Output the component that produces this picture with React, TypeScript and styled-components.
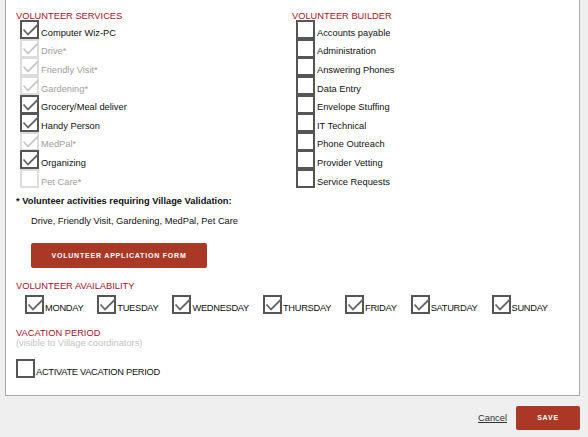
import React from 'react';
import styled, { createGlobalStyle } from 'styled-components';

const GlobalStyle = createGlobalStyle`
  body {
    margin: 0;
    background: #efefef;
    font-family: "Liberation Sans", Arial, sans-serif;
    color: #111;
  }
`;

const Page = styled.div`
  width: 588px;
  height: 437px;
  overflow: hidden;
`;

const Panel = styled.div`
  margin-left: 5px;
  width: 575px;
  padding: 11px 0 17px 10px;
  box-sizing: border-box;
  background: #fff;
  border: 1px solid #aaa;
  border-top: none;
`;

const Columns = styled.div`
  display: grid;
  grid-template-columns: 276px 1fr;
`;

const SectionTitle = styled.div<{ $gap?: number }>`
  margin-top: ${({ $gap }) => $gap || 0}px;
  font-size: 9.3px;
  line-height: 10px;
  color: #a3102c;
  text-transform: uppercase;
`;

const List = styled.div`
  margin-top: -1px;
  padding-left: 4px;
`;

const Row = styled.div`
  display: flex;
  align-items: flex-end;
  height: 18.625px;
`;

const Box = styled.span<{ $disabled?: boolean }>`
  position: relative;
  flex: none;
  width: 19px;
  height: 19px;
  margin-bottom: -0.375px;
  box-sizing: border-box;
  border: 2px solid ${({ $disabled }) => ($disabled ? '#dcdcdc' : '#555')};
  background: #fff;
`;

const Label = styled.span<{ $disabled?: boolean; $caps?: boolean }>`
  margin-left: ${({ $caps }) => ($caps ? 1 : 2)}px;
  font-size: 9.3px;
  line-height: 12px;
  letter-spacing: ${({ $caps }) => ($caps ? '-0.3px' : '0')};
  color: ${({ $disabled }) => ($disabled ? '#a0a0a0' : '#111')};
  white-space: nowrap;
`;

const Note = styled.div`
  margin-top: 7px;
  font-size: 9.3px;
  line-height: 12px;
  font-weight: bold;
`;

const NoteList = styled.div`
  margin-top: 8px;
  padding-left: 15px;
  font-size: 9.3px;
  line-height: 12px;
`;

const RedButton = styled.button`
  display: block;
  height: 25px;
  border: none;
  border-radius: 2px;
  background: #a93826;
  color: #fff;
  font-family: "Liberation Sans", Arial, sans-serif;
  font-size: 7px;
  font-weight: bold;
  letter-spacing: 0.8px;
  padding: 0;
  cursor: pointer;
`;

const FormButton = styled(RedButton)`
  margin: 16px 0 0 15px;
  width: 176px;
`;

const Days = styled.div`
  display: flex;
  gap: 14px;
  margin-top: 3.5px;
  padding-left: 9px;
`;

const Item = styled.div<{ $gap?: number }>`
  display: flex;
  align-items: flex-end;
  height: 19px;
  margin-top: ${({ $gap }) => $gap || 0}px;
`;

const Hint = styled.div`
  font-size: 9.3px;
  line-height: 10px;
  color: #c2c2c2;
`;

const Footer = styled.div`
  display: flex;
  justify-content: flex-end;
  align-items: center;
  gap: 9px;
  padding: 10px 8px 0 0;
`;

const CancelLink = styled.a`
  font-size: 9.3px;
  color: #333;
  text-decoration: underline;
  cursor: pointer;
`;

const SaveButton = styled(RedButton)`
  width: 64px;
  height: 24px;
`;

const Check = ({ disabled }: { disabled?: boolean }) => (
  <svg width="17" height="15" viewBox="0 0 17 15" style={{ position: 'absolute', left: 0, top: 1 }}>
    <polyline
      points="1.5,6.5 6,11.5 16,1.5"
      fill="none"
      stroke={disabled ? '#c8c8c8' : '#666'}
      strokeWidth="1.8"
    />
  </svg>
);

interface CheckItem {
  label: string;
  checked?: boolean;
  disabled?: boolean;
}

const Checkbox = ({ checked, disabled }: { checked?: boolean; disabled?: boolean }) => (
  <Box $disabled={disabled}>{checked && <Check disabled={disabled} />}</Box>
);

const SERVICES: CheckItem[] = [
  { label: 'Computer Wiz-PC', checked: true },
  { label: 'Drive*', checked: true, disabled: true },
  { label: 'Friendly Visit*', checked: true, disabled: true },
  { label: 'Gardening*', checked: true, disabled: true },
  { label: 'Grocery/Meal deliver', checked: true },
  { label: 'Handy Person', checked: true },
  { label: 'MedPal*', checked: true, disabled: true },
  { label: 'Organizing', checked: true },
  { label: 'Pet Care*', disabled: true },
];

const BUILDER: CheckItem[] = [
  { label: 'Accounts payable' },
  { label: 'Administration' },
  { label: 'Answering Phones' },
  { label: 'Data Entry' },
  { label: 'Envelope Stuffing' },
  { label: 'IT Technical' },
  { label: 'Phone Outreach' },
  { label: 'Provider Vetting' },
  { label: 'Service Requests' },
];

const DAYS = ['Monday', 'Tuesday', 'Wednesday', 'Thursday', 'Friday', 'Saturday', 'Sunday'];

const CheckList = ({ items }: { items: CheckItem[] }) => (
  <List>
    {items.map((item) => (
      <Row key={item.label}>
        <Checkbox checked={item.checked} disabled={item.disabled} />
        <Label $disabled={item.disabled}>{item.label}</Label>
      </Row>
    ))}
  </List>
);

const App = () => {
  return (
    <Page>
      <GlobalStyle />
      <Panel>
        <Columns>
          <div>
            <SectionTitle>Volunteer Services</SectionTitle>
            <CheckList items={SERVICES} />
          </div>
          <div>
            <SectionTitle>Volunteer Builder</SectionTitle>
            <CheckList items={BUILDER} />
          </div>
        </Columns>
        <Note>* Volunteer activities requiring Village Validation:</Note>
        <NoteList>Drive, Friendly Visit, Gardening, MedPal, Pet Care</NoteList>
        <FormButton>VOLUNTEER APPLICATION FORM</FormButton>
        <SectionTitle $gap={13.5}>Volunteer Availability</SectionTitle>
        <Days>
          {DAYS.map((day) => (
            <Item key={day}>
              <Checkbox checked />
              <Label $caps>{day.toUpperCase()}</Label>
            </Item>
          ))}
        </Days>
        <SectionTitle $gap={14.5}>Vacation Period</SectionTitle>
        <Hint>(visible to Village coordinators)</Hint>
        <Item $gap={10.5}>
          <Checkbox />
          <Label $caps>ACTIVATE VACATION PERIOD</Label>
        </Item>
      </Panel>
      <Footer>
        <CancelLink>Cancel</CancelLink>
        <SaveButton>SAVE</SaveButton>
      </Footer>
    </Page>
  );
};

export default App;
